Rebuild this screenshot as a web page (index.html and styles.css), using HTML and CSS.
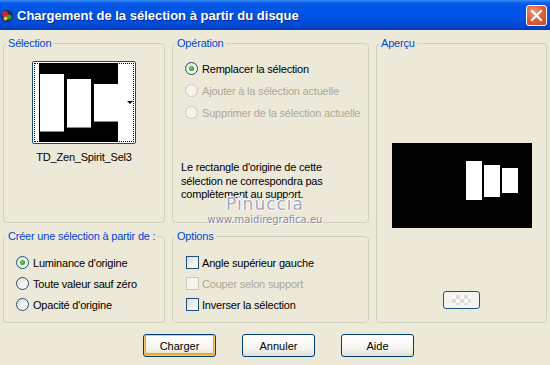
FILE: index.html
```html
<!DOCTYPE html>
<html lang="fr">

<head>
    <meta charset="UTF-8">
    <title>Chargement de la sélection à partir du disque</title>
    <link rel="stylesheet" href="styles.css">
</head>

<body>
    <div class="window">
        <div class="titlebar">
            <svg class="app-icon" width="14" height="14" viewBox="0 0 14 14">
                <circle cx="7" cy="7" r="6" fill="#2a2a3a" />
                <circle cx="5" cy="5" r="3" fill="#d8203a" />
                <circle cx="9" cy="8" r="2.6" fill="#2c9b3c" />
                <circle cx="5.5" cy="9.5" r="2" fill="#e8c020" />
            </svg>
            <span class="title">Chargement de la sélection à partir du disque</span>
            <div class="close">
                <svg width="13" height="13" viewBox="0 0 13 13">
                    <path d="M2 2 L11 11 M11 2 L2 11" stroke="#fff" stroke-width="2.2" stroke-linecap="square" />
                </svg>
            </div>
        </div>

        <div class="content">
            <fieldset class="group sel">
                <legend>Sélection</legend>
                <div class="thumb">
                    <svg class="thumb-img" width="79" height="79" viewBox="0 0 79 79">
                        <rect width="79" height="79" fill="#000" />
                        <rect x="1" y="11" width="24" height="58" fill="#fff" />
                        <rect x="1" y="68" width="24" height="1" fill="#888" />
                        <rect x="28" y="16" width="24" height="49" fill="#fff" />
                        <rect x="28" y="64" width="24" height="1" fill="#888" />
                        <rect x="55" y="21" width="24" height="38" fill="#fff" />
                        <rect x="55" y="58" width="24" height="1" fill="#888" />
                    </svg>
                    <span class="arrow"></span>
                </div>
                <div class="thumb-name">TD_Zen_Spirit_Sel3</div>
            </fieldset>

            <fieldset class="group op">
                <legend>Opération</legend>
                <div class="choices">
                    <label class="opt"><span class="radio on"></span>Remplacer la sélection</label>
                    <label class="opt off"><span class="radio"></span>Ajouter à la sélection actuelle</label>
                    <label class="opt off"><span class="radio"></span>Supprimer de la sélection actuelle</label>
                </div>
                <p class="note">Le rectangle d'origine de cette sélection ne correspondra pas complètement au support.</p>
            </fieldset>

            <fieldset class="group preview">
                <legend>Aperçu</legend>
                <svg class="preview-img" width="140" height="85" viewBox="0 0 140 85">
                    <rect width="140" height="85" fill="#000" />
                    <rect x="74" y="18" width="16" height="39" fill="#fff" />
                    <rect x="92" y="22" width="16" height="32" fill="#fff" />
                    <rect x="110" y="25" width="16" height="25" fill="#fff" />
                </svg>
                <div class="bg-btn"><span class="checker"></span></div>
            </fieldset>

            <fieldset class="group create">
                <legend>Créer une sélection à partir de :</legend>
                <div class="choices">
                    <label class="opt"><span class="radio on"></span>Luminance d'origine</label>
                    <label class="opt"><span class="radio"></span>Toute valeur sauf zéro</label>
                    <label class="opt"><span class="radio"></span>Opacité d'origine</label>
                </div>
            </fieldset>

            <fieldset class="group options">
                <legend>Options</legend>
                <div class="choices">
                    <label class="opt"><span class="check"></span>Angle supérieur gauche</label>
                    <label class="opt off"><span class="check"></span>Couper selon support</label>
                    <label class="opt"><span class="check"></span>Inverser la sélection</label>
                </div>
            </fieldset>

            <div class="watermark">
                <div class="wm-name">Pinuccia</div>
                <div class="wm-url">www.maidiregrafica.eu</div>
            </div>
        </div>

        <div class="buttons">
            <button class="btn default">Charger</button>
            <button class="btn">Annuler</button>
            <button class="btn">Aide</button>
        </div>
    </div>
</body>

</html>
```

FILE: styles.css
```css
* {
    box-sizing: border-box;
}

body {
    margin: 0;
    font-family: "Liberation Sans", Arial, sans-serif;
    font-size: 11px;
    letter-spacing: -0.2px;
    color: #000;
    background: #ece9d8;
}

.window {
    width: 550px;
    height: 365px;
    background: #ece9d8;
    overflow: hidden;
}

/* title bar */
.titlebar {
    height: 30px;
    display: flex;
    align-items: center;
    background: linear-gradient(to bottom, #3b8cf5 0, #0a5ee9 3px, #0055e5 7px, #0053e1 18px, #0049d6 25px, #0040c4 28px, #003cb0 30px);
}

.app-icon {
    margin-left: 0;
    margin-top: 1px;
}

.title {
    margin-left: 3px;
    color: #fff;
    font-weight: bold;
    font-size: 13px;
    text-shadow: 1px 1px 0 #0a2a8a;
    letter-spacing: 0;
}

.close {
    margin-left: auto;
    margin-right: 3px;
    width: 21px;
    height: 21px;
    border: 1px solid #fff;
    border-radius: 3px;
    background: radial-gradient(circle at 35% 30%, #f09a7a 0, #e2603c 45%, #cc4520 100%);
    display: flex;
    align-items: center;
    justify-content: center;
}

/* group boxes */
.content {
    position: relative;
    display: grid;
    grid-template-columns: 162px 197px 171px;
    grid-template-rows: 186px 93px;
    column-gap: 7px;
    row-gap: 7px;
    padding: 7px 0 0 3px;
}

.group {
    margin: 0;
    padding: 0;
    min-width: 0;
    border: 1px solid #d0d0bf;
    border-radius: 4px;
}

.group legend {
    margin-left: 2px;
    padding: 0 2px;
    color: #0046d5;
    line-height: 13px;
    white-space: nowrap;
}

.sel {
    display: flex;
    flex-direction: column;
    align-items: center;
}

.thumb {
    margin-top: 11px;
    width: 104px;
    height: 83px;
    border: 1px solid #1c4a80;
    border-radius: 2px;
    background: #fff;
    position: relative;
    padding: 1px 0 0 6px;
}

.thumb::after {
    content: "";
    position: absolute;
    left: 1px;
    top: 1px;
    right: 1px;
    bottom: 1px;
    border: 1px dotted #000;
}

.thumb-img {
    display: block;
}

.arrow {
    position: absolute;
    left: 94px;
    top: 39px;
    border-left: 3px solid transparent;
    border-right: 3px solid transparent;
    border-top: 3px solid #000;
}

.thumb-name {
    margin-top: 7px;
}

.choices {
    display: flex;
    flex-direction: column;
}

.opt {
    display: flex;
    align-items: center;
    height: 21px;
}

.opt.off {
    color: #aca899;
}

.radio {
    width: 13px;
    height: 13px;
    border: 1px solid #1c5180;
    border-radius: 50%;
    background: linear-gradient(135deg, #dcd9cf 0, #f2f1ec 50%, #fff 100%);
    margin-right: 4px;
    position: relative;
}

.radio.on::after {
    content: "";
    position: absolute;
    left: 3px;
    top: 3px;
    width: 5px;
    height: 5px;
    border-radius: 50%;
    background: radial-gradient(circle at 40% 40%, #6ed36e 0, #21a121 70%);
}

.off .radio,
.off .check {
    border-color: #cac8bb;
    background: #f4f3ee;
}

.check {
    width: 13px;
    height: 13px;
    border: 1px solid #1c5180;
    background: linear-gradient(135deg, #dcd9cf 0, #f2f1ec 55%, #fff 100%);
    margin-right: 3px;
}

.op .choices {
    padding: 8px 0 0 12px;
}

.op .choices .opt:nth-child(2) {
    height: 23px;
}

.note {
    margin: 38px 0 0 8px;
    line-height: 13.5px;
    width: 180px;
}

.preview {
    grid-row: 1 / 3;
    grid-column: 3;
    display: flex;
    flex-direction: column;
    align-items: center;
}

.preview-img {
    display: block;
    margin-top: 93px;
}

.bg-btn {
    margin-top: 63px;
    width: 37px;
    height: 18px;
    border: 1px solid #1c5180;
    border-radius: 3px;
    background: #f4f3ee;
    padding: 3px 8px;
}

.checker {
    display: block;
    width: 19px;
    height: 10px;
    background:
        linear-gradient(45deg, #dcdcdc 25%, transparent 25%, transparent 75%, #dcdcdc 75%),
        linear-gradient(45deg, #dcdcdc 25%, #fafafa 25%, #fafafa 75%, #dcdcdc 75%);
    background-size: 8px 8px;
    background-position: 0 0, 4px 4px;
}

.create .choices {
    padding: 9px 0 0 12px;
}

.options .choices {
    padding: 9px 0 0 13px;
}

/* watermark over the dialog */
.watermark {
    position: absolute;
    left: 204px;
    top: 165px;
    text-align: center;
    width: 122px;
    pointer-events: none;
    letter-spacing: 0;
}

.wm-name {
    font-family: "DejaVu Sans", sans-serif;
    font-size: 17px;
    letter-spacing: 1px;
    color: #a8a4c0;
    line-height: 18px;
    text-shadow: 1px 0 0 #fff, -1px 0 0 #fff, 0 1px 0 #fff, 0 -1px 0 #fff;
}

.wm-url {
    font-family: "DejaVu Sans", sans-serif;
    font-size: 10px;
    color: #8c8aa2;
    line-height: 12px;
    margin-top: 1px;
    text-shadow: 1px 1px 0 #fff;
}

/* dialog buttons */
.buttons {
    display: flex;
    gap: 26px;
    padding: 11px 0 0 143px;
}

.btn {
    width: 73px;
    height: 23px;
    font-family: "Liberation Sans", Arial, sans-serif;
    font-size: 11px;
    color: #000;
    border: 1px solid #003c74;
    border-radius: 3px;
    background: linear-gradient(to bottom, #fff 0, #f6f5f0 60%, #e3e1d6 100%);
    padding: 0;
}

.btn.default {
    box-shadow: inset 0 0 0 1px #fcc86a, inset 0 -1px 0 2px #f5a524;
}
```
